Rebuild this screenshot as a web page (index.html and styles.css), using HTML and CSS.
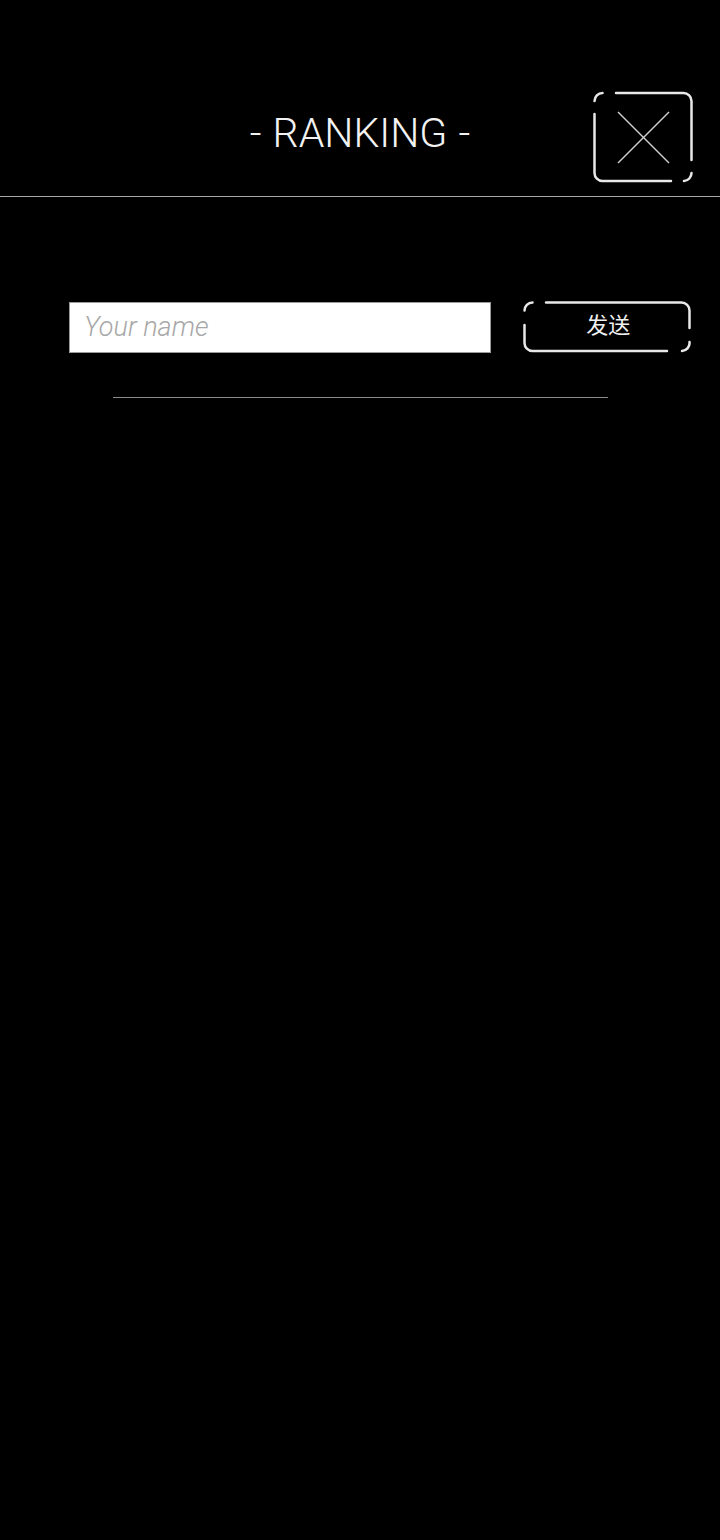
FILE: index.html
```html
<!DOCTYPE html>
<html lang="zh">
<head>
<meta charset="utf-8">
<title>Ranking</title>
<link rel="stylesheet" href="styles.css">
</head>
<body>
<div class="page">
  <header class="header">
    <h1 class="title">- RANKING -</h1>
    <button class="close" type="button" aria-label="close">
      <svg class="frame" width="100" height="92" viewBox="0 0 100 92" fill="none">
        <g stroke="#e8e8e8" stroke-width="2.5" stroke-linecap="round">
          <path d="M1.5,10 A8,8 0 0 1 9.5,2"/>
          <path d="M23,2 H90.5 A8,8 0 0 1 98.5,10 V69"/>
          <path d="M1.5,23 V82 A8,8 0 0 0 9.5,90 H78"/>
          <path d="M98.5,82 A8,8 0 0 1 91,90"/>
        </g>
        <g stroke="#d0d0d0" stroke-width="1.5">
          <path d="M25,21 L76,72"/>
          <path d="M76,21 L25,72"/>
        </g>
      </svg>
    </button>
  </header>

  <div class="entry">
    <input class="name" type="text" placeholder="Your name">
    <button class="send" type="button">
      <svg class="frame" width="168" height="52" viewBox="0 0 168 52" fill="none">
        <g stroke="#e8e8e8" stroke-width="2.5" stroke-linecap="round">
          <path d="M1.5,9.5 A8,8 0 0 1 9.5,1.5"/>
          <path d="M23,1.5 H158.5 A8,8 0 0 1 166.5,9.5 V27"/>
          <path d="M1.5,24 V42 A8,8 0 0 0 9.5,50 H144"/>
          <path d="M166.5,41 A8,8 0 0 1 159,50"/>
        </g>
      </svg>
      <span class="send-label">发送</span>
    </button>
  </div>

  <div class="divider"></div>
</div>
</body>
</html>
```

FILE: styles.css
```css
html, body {
  margin: 0;
  padding: 0;
  background: #000;
}

.page {
  min-height: 1540px;
  background: #000;
  color: #fff;
  font-family: Roboto, "Noto Sans", sans-serif;
}

.header {
  display: grid;
  grid-template-columns: 1fr auto 1fr;
  align-items: center;
  padding: 91px 27px 13px;
  border-bottom: 1.5px solid #a8a8a8;
}

.title {
  grid-column: 2;
  margin: 0 0 8px;
  font-family: Roboto, "DejaVu Sans", sans-serif;
  font-weight: 300;
  font-size: 41px;
  letter-spacing: 0;
  word-spacing: 1px;
  color: #f2f2f2;
  white-space: pre;
}

.close {
  grid-column: 3;
  justify-self: end;
  position: relative;
  width: 100px;
  height: 92px;
  padding: 0;
  border: 0;
  background: transparent;
}

.frame {
  position: absolute;
  left: 0;
  top: 0;
  display: block;
}

.entry {
  display: flex;
  align-items: center;
  gap: 32px;
  padding: 104px 29px 0 69px;
}

.name {
  width: 423px;
  height: 51px;
  box-sizing: border-box;
  border: 1px solid #9a9a9a;
  background: #fff;
  padding: 0 0 0 14px;
  margin: 0;
  font-family: Roboto, "Liberation Sans", sans-serif;
  font-weight: 300;
  font-style: italic;
  font-size: 27px;
  color: #333;
  outline: none;
}

.name::placeholder {
  color: #a8a8a8;
}

.send {
  position: relative;
  width: 168px;
  height: 52px;
  padding: 0;
  border: 0;
  background: transparent;
  display: flex;
  align-items: center;
  justify-content: center;
}

.send-label {
  position: relative;
  font-family: "Noto Sans CJK SC", sans-serif;
  font-weight: 400;
  font-size: 22px;
  color: #f0f0f0;
  margin-left: 2px;
  margin-bottom: 8px;
}

.divider {
  width: 495px;
  margin: 44px auto 0;
  border-top: 1.5px solid #8a8a8a;
}
```
